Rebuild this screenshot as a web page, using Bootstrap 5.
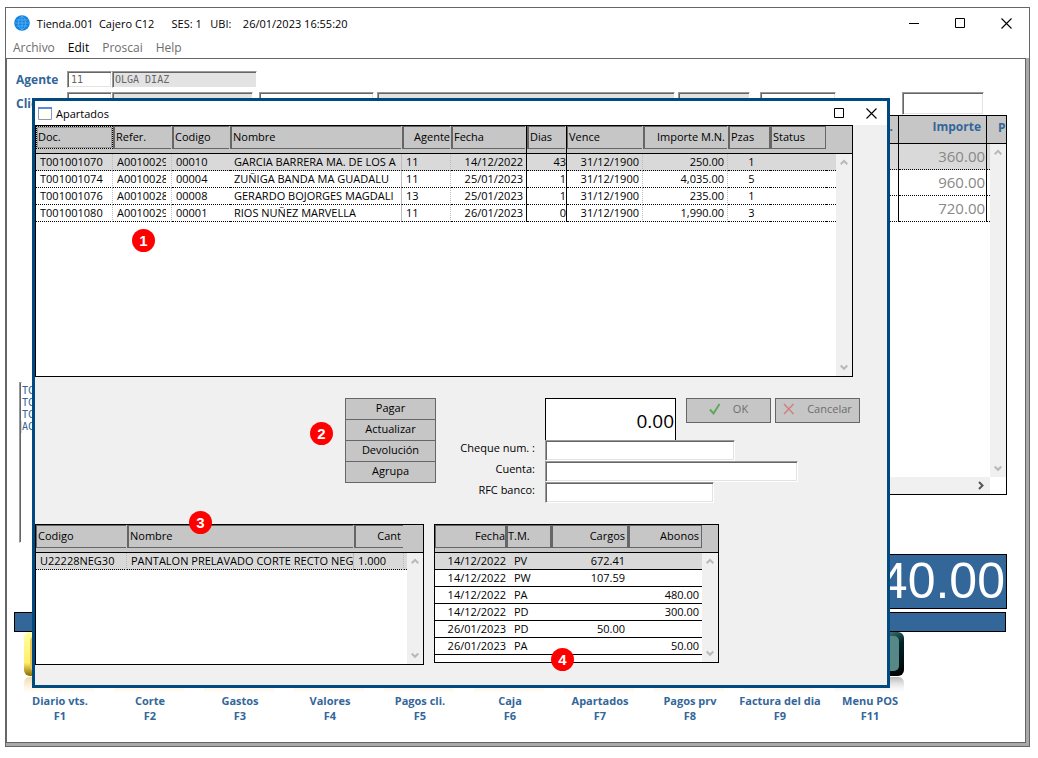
<!DOCTYPE html>
<html lang="es">
<head>
<meta charset="utf-8">
<meta name="viewport" content="width=device-width, initial-scale=1">
<title>Tienda.001 Cajero C12</title>
<link href="https://cdn.jsdelivr.net/npm/bootstrap@5.3.0/dist/css/bootstrap.min.css" rel="stylesheet">
<style>
  body { background: #fff; color: #000; font: 11px/17px "Open Sans", "Noto Sans", sans-serif; }
  a { text-decoration: none; }
  .pos { --blue: #336699; }
  .blue { color: var(--blue); }
  .app-window { margin: 7px 8px 11px 5px; border: 1px solid #666; min-height: calc(100vh - 18px); }
  .app-title { height: 30px; padding-left: 8px; white-space: pre; line-height: 15px; }
  .win-btn { width: 46px; height: 28px; padding: 0; border: 0; background: none; color: #000; display: flex; align-items: center; justify-content: center; }
  .menu-bar { height: 20px; padding-left: 7px; gap: 13px; }
  .menu-bar a { color: #6d6d6d; font-size: 12px; line-height: 20px; }
  .menu-bar a.on { color: #000; }
  .client { background: #a9a9a9; padding: 0 3px 3px 0; }
  .client-in { background: #fff; border: 1px solid #666; }

  .sunk { height: 17px; border: 1px solid; border-color: #999 #fff #fff #999; box-shadow: inset 1px 1px #666, inset -1px -1px #e3e3e3; background: #fff; border-radius: 0; padding: 0 3px; color: #666; font: 10px/13px "DejaVu Sans Mono", monospace; min-width: 0; }
  .sunk[readonly] { background: #e3e3e3; padding-left: 2px; }
  .pos-label { width: 51px; font-size: 12px; font-weight: 700; color: var(--blue); }
  .pos-row { padding-left: 9px; }
  .pos-row.top { padding-top: 12px; padding-bottom: 4px; }
  .pos-row.second { height: 23px; padding-right: 41px; }
  .w-code { width: 45px; }

  .panel { border: 1px solid #000; background: #fff; }
  .sheet { table-layout: fixed; width: 100%; border-collapse: separate; border-spacing: 0; flex: 1 1 0; min-width: 0; align-self: flex-start; }
  .sheet th { height: 28px; padding: 0; font-weight: 400; background: #c6c6c6; border-bottom: 1px solid #000; vertical-align: top; }
  .sheet th > span { display: block; height: 23px; line-height: 20px; padding: 0 2px 0 1px; border: 1px solid #666; border-left-width: 2px; white-space: nowrap; overflow: hidden; }
  .sheet th.first > span { border-left-width: 1px; padding-left: 1px; }
  .sheet th.open > span { border-right: 0; margin-right: 1px; }
  .sheet th.focus > span { border-style: dotted; border-color: #000; box-shadow: inset 0 0 0 1px #999; }
  .sheet td { height: 17px; line-height: 16px; padding: 0 3px 0 4px; border-bottom: 1px dotted #000; white-space: nowrap; overflow: hidden; }
  .sheet tr.sel td { background: #d9d9d9; }
  .sheet .dot { border-right: 1px dotted #bbb; }
  .sheet .gray { border-right: 1px solid #bbb; }
  .sheet .line { border-right: 1px solid #000; }
  .sheet.solid td { border-bottom-style: solid; }
  .sheet td.ref { padding-right: 5px; }
  .ref span { display: block; overflow: hidden; }
  .track { width: 16px; background: #f0f0f0; }
  .cap { height: 28px; background: #c6c6c6; border-bottom: 1px solid #000; flex: none; }
  .cap.unit { padding: 3px 0 0 8px; font-size: 12px; font-weight: 700; overflow: hidden; }
  .track svg { display: block; margin: 5px auto; }
  .num { text-align: right; }
  .sheet td.num { padding-right: 3px; }

  .sheet.big th > span { border: 0; padding: 0 5px; line-height: 22px; font-size: 12px; font-weight: 700; color: var(--blue); }
  .sheet.big td { height: 26px; line-height: 25px; font-size: 15px; color: #888; }
  .sheet.big td.num { padding-right: 1px; }
  .workspace { height: 428px; }
  .pos-grid { height: 380px; margin-right: 18px; }
  .hbar { height: 17px; }
  .hbar .rail { background: #f0f0f0; }
  .recent { width: 108px; height: 161px; margin: 0 18px 0 12px; padding: 2px 0 0 1px; }
  .recent li { font: 10px/12px "DejaVu Sans Mono", monospace; color: var(--blue); padding-left: 1px; }
  .recent li.sel { background: #d9d9d9; }
  .total { width: 400px; height: 55px; margin: 11px 18px 3px auto; background: var(--blue); color: #fff; border: 1px solid #000; font: 50px/53px "Liberation Sans", sans-serif; text-align: right; padding-right: 1px; }
  .strip { height: 20px; margin: 0 19px 0 7px; background: var(--blue); border: 1px solid #000; }
  .keys { padding-left: 8px; }
  .key { width: 90px; text-align: center; font-weight: 700; line-height: 15px; color: var(--blue); }
  .key svg { display: block; margin: 0 auto 1px 9px; }

  .dialog { position: absolute; left: 26px; right: 139px; top: 90px; border: 3px solid #004a80; background: #f0f0f0; }
  .dlg-title { height: 24px; background: #fff; padding-left: 3px; }
  .dlg-title .win-btn { width: 32px; height: 24px; }
  .main-panel { height: 252px; margin-right: 34px; }
  .controls { padding: 21px 28px 0 310px; height: 147px; }
  .flat { height: 22px; margin-bottom: -1px; width: 91px; border: 1px solid #666; background: #c6c6c6; color: #000; border-radius: 0; padding: 0 0 2px; font-size: 11px; line-height: 16px; }
  .flat.wide { width: 85px; height: 25px; color: #6d6d6d; margin: 0; padding-bottom: 3px; }
  .pay { margin-left: 20px; }
  .pay-top { padding-left: 89px; }
  .pay-top .flat:first-of-type { margin-left: 10px; }
  .amount { width: 131px; height: 42px; border: 1px solid #000; border-bottom: 0; border-radius: 0; text-align: right; padding: 2px 1px 0 0; background: #fff; font: 19px "Open Sans", sans-serif; }
  .pay label { width: 79px; text-align: right; margin-right: 10px; line-height: 15px; }
  .pay .sunk { height: 21px; }
  .w-cheque { width: 190px; }
  .w-cuenta { width: 253px; }
  .w-rfc { width: 169px; }
  .detail { width: 389px; height: 141px; }
  .moves { width: 285px; height: 139px; }
  .lower { gap: 10px; padding-bottom: 20px; }
  .pin { position: absolute; width: 23px; height: 23px; border-radius: 50%; background: #f00; color: #fff; font: bold 15px/23px "Liberation Sans", sans-serif; text-align: center; }
  .pin-1 { left: 96px; top: 103px; }
  .pin-2 { left: -35px; top: 24px; }
  .pin-3 { left: 153px; top: -14px; }
  .pin-4 { left: 116px; bottom: -9px; }
</style>
</head>
<body>
<svg width="0" height="0" class="position-absolute" aria-hidden="true">
  <defs>
    <symbol id="up" viewBox="0 0 8 7"><path d="M.7 5.2 4 1.9l3.300 3.300" fill="none" stroke="#b8b8b8" stroke-width="2"/></symbol>
    <symbol id="down" viewBox="0 0 8 7"><path d="M.7 1.500 4 4.800l3.300-3.300" fill="none" stroke="#b8b8b8" stroke-width="2"/></symbol>
    <symbol id="square" viewBox="0 0 11 11"><path d="M.5.5h9v9h-9z" fill="none" stroke="#000"/></symbol>
    <symbol id="cross" viewBox="0 0 11 11"><path d="m.5.5 10 10m0-10-10 10" fill="none" stroke="#000" stroke-width="1.100"/></symbol>
    <linearGradient id="gold" x1="0" y1="0" x2="0" y2="1"><stop offset="0" stop-color="#ffffa0"/><stop offset=".7" stop-color="#ffee6a"/><stop offset="1" stop-color="#8a6a00"/></linearGradient>
    <linearGradient id="teal" x1="0" y1="0" x2="1" y2="1"><stop offset="0" stop-color="#9cc4c4"/><stop offset=".4" stop-color="#3d7070"/><stop offset=".6" stop-color="#002428"/><stop offset="1" stop-color="#000"/></linearGradient>
    <linearGradient id="mirror" x1="0" y1="0" x2="0" y2="1"><stop offset="0" stop-color="#888" stop-opacity=".6"/><stop offset="1" stop-color="#eee" stop-opacity=".1"/></linearGradient>
    <linearGradient id="glow" x1="0" y1="0" x2="0" y2="1"><stop offset="0" stop-color="#e8cc80" stop-opacity=".7"/><stop offset="1" stop-color="#fff4e8" stop-opacity=".3"/></linearGradient>
    <symbol id="key-gold" viewBox="0 0 70 60"><rect width="70" height="44" rx="6" fill="url(#gold)"/><rect x="6" y="4" width="58" height="35" rx="5" fill="#ecc44e"/><path d="M0 60V52q0-7 6-7h58q6 0 6 7v8z" fill="url(#glow)"/></symbol>
    <symbol id="key-teal" viewBox="0 0 70 60"><rect width="70" height="44" rx="6" fill="url(#teal)"/><rect x="6" y="4" width="59" height="35" rx="5" fill="#568888"/><path d="M0 60V52q0-7 6-7h58q6 0 6 7v8z" fill="url(#mirror)"/></symbol>
  </defs>
</svg>

<div class="pos app-window position-relative d-flex flex-column">
  <header class="app-title d-flex align-items-center">
    <svg width="16" height="16" viewBox="0 0 16 16" class="me-1" aria-hidden="true"><circle cx="8" cy="8" r="7.800" fill="#1382e0"/><g stroke="#58b4f4" stroke-width=".8" fill="none"><path d="M2.500 5h11M1 8h14M2.500 11h11M8 1v14"/><ellipse cx="8" cy="8" rx="3.500" ry="6.500"/></g></svg>
    <span class="flex-grow-1"> Tienda.001  Cajero C12      SES: 1   UBI:    26/01/2023 16:55:20</span>
    <button class="win-btn" aria-label="Minimizar"><svg width="11" height="11"><path d="M0 5.500h10" stroke="#000"/></svg></button>
    <button class="win-btn" aria-label="Maximizar"><svg width="11" height="11"><use href="#square"/></svg></button>
    <button class="win-btn" aria-label="Cerrar"><svg width="11" height="11"><use href="#cross"/></svg></button>
  </header>
  <nav class="menu-bar d-flex align-items-center">
    <a href="#">Archivo</a><a href="#" class="on">Edit</a><a href="#">Proscai</a><a href="#">Help</a>
  </nav>

  <main class="client flex-grow-1 d-flex">
    <div class="client-in flex-grow-1">
      <div class="pos-row top d-flex align-items-center">
        <label class="pos-label" for="agente">Agente</label>
        <input id="agente" class="sunk w-code" value="11">
        <input class="sunk" style="width:145px" value="OLGA DIAZ" aria-label="Nombre del agente" readonly>
      </div>
      <div class="pos-row second d-flex align-items-center">
        <label class="pos-label" for="cliente">Cliente</label>
        <input id="cliente" class="sunk w-code h-100">
        <input class="sunk h-100" style="width:141px" value="GARCIA BARRERA MA. DE L" aria-label="Nombre del cliente" readonly>
        <input class="sunk h-100" style="width:115px;margin-left:6px" aria-label="Dato 1">
        <input class="sunk h-100 flex-grow-1" style="width:50px;margin:0 3px" aria-label="Dato 2" readonly>
        <input class="sunk h-100" style="width:72px" aria-label="Dato 3" readonly>
        <input class="sunk h-100" style="width:76px;margin:0 66px 0 10px" aria-label="Dato 4">
        <input class="sunk h-100" style="width:82px" aria-label="Dato 5">
      </div>

      <div class="workspace d-flex">
        <ul class="recent list-unstyled align-self-end sunk"><li>TC</li><li>TC</li><li>TC</li><li class="sel">AC</li></ul>
        <div class="flex-grow-1">
          <div class="pos-grid panel d-flex flex-column">
            <div class="d-flex flex-grow-1">
              <table class="sheet big">
                <colgroup><col><col style="width:88px"><col style="width:3px"></colgroup>
                <thead><tr><th class="num line"><span>Precio.</span></th><th class="num line"><span>Importe</span></th><th></th></tr></thead>
                <tbody>
                  <tr class="sel"><td class="line"></td><td class="num line">360.00</td><td></td></tr>
                  <tr><td class="line"></td><td class="num line">960.00</td><td></td></tr>
                  <tr><td class="line"></td><td class="num line">720.00</td><td></td></tr>
                </tbody>
              </table>
              <div class="track d-flex flex-column">
                <div class="cap unit blue">P</div>
                <svg width="8" height="7"><use href="#up"/></svg>
                <svg width="8" height="7" class="mt-auto"><use href="#down"/></svg>
              </div>
            </div>
            <div class="hbar d-flex">
              <div class="rail flex-grow-1 d-flex align-items-center justify-content-end"><svg width="9" height="9" class="me-1"><path d="m2 1 3.500 3.500L2 8" fill="none" stroke="#555" stroke-width="2"/></svg></div>
              <div class="ps-3"></div>
            </div>
          </div>
        </div>
      </div>
      <div class="total">2,040.00</div>
      <div class="strip"></div>
      <nav class="keys d-flex">
        <a class="key" href="#"><svg width="70" height="60"><use href="#key-gold"/></svg>Diario vts.<br>F1</a>
        <a class="key" href="#"><svg width="70" height="60"><use href="#key-gold"/></svg>Corte<br>F2</a>
        <a class="key" href="#"><svg width="70" height="60"><use href="#key-gold"/></svg>Gastos<br>F3</a>
        <a class="key" href="#"><svg width="70" height="60"><use href="#key-gold"/></svg>Valores<br>F4</a>
        <a class="key" href="#"><svg width="70" height="60"><use href="#key-gold"/></svg>Pagos cli.<br>F5</a>
        <a class="key" href="#"><svg width="70" height="60"><use href="#key-gold"/></svg>Caja<br>F6</a>
        <a class="key" href="#"><svg width="70" height="60"><use href="#key-gold"/></svg>Apartados<br>F7</a>
        <a class="key" href="#"><svg width="70" height="60"><use href="#key-gold"/></svg>Pagos prv<br>F8</a>
        <a class="key" href="#"><svg width="70" height="60"><use href="#key-gold"/></svg>Factura del dia<br>F9</a>
        <a class="key" href="#"><svg width="70" height="60"><use href="#key-teal"/></svg>Menu POS<br>F11</a>
      </nav>
    </div>
  </main>

  <section class="dialog" role="dialog" aria-label="Apartados">
    <div class="dlg-title d-flex align-items-center">
      <svg width="14" height="13" class="me-1" aria-hidden="true"><path d="M.5.5h13v12H.5z" fill="#fffff4" stroke="#8c96c8"/><path d="M0 1h14" stroke="#5b8be0" stroke-width="2"/></svg>
      <span class="flex-grow-1">Apartados</span>
      <button class="win-btn" aria-label="Maximizar"><svg width="11" height="11"><use href="#square"/></svg></button>
      <button class="win-btn" aria-label="Cerrar"><svg width="11" height="11"><use href="#cross"/></svg></button>
    </div>

    <div class="main-panel panel d-flex position-relative">
      <table class="sheet">
        <colgroup><col style="width:77px"><col style="width:59px"><col style="width:58px"><col style="width:172px"><col style="width:49px"><col style="width:76px"><col style="width:40px"><col style="width:76px"><col style="width:85px"><col style="width:42px"><col style="width:56px"><col></colgroup>
        <thead><tr>
          <th class="first focus"><span>Doc.</span></th><th class="open"><span>Refer.</span></th><th class="open"><span>Codigo</span></th><th class="open"><span>Nombre</span></th><th class="open num"><span class="px-0">Agente</span></th><th class="line open"><span>Fecha</span></th><th class="line open"><span>Dias</span></th><th class="open first"><span>Vence</span></th><th class="open num"><span>Importe M.N.</span></th><th><span>Pzas</span></th><th><span>Status</span></th><th></th>
        </tr></thead>
        <tbody>
          <tr class="sel"><td class="dot">T001001070</td><td class="dot ref"><span>A0010029</span></td><td>00010</td><td class="gray">GARCIA BARRERA MA. DE LOS A</td><td class="dot">11</td><td class="num line">14/12/2022</td><td class="num line pe-0">43</td><td class="num dot">31/12/1900</td><td class="num dot">250.00</td><td class="text-center ps-2">1</td><td></td><td></td></tr>
          <tr><td class="dot">T001001074</td><td class="dot ref"><span>A0010028</span></td><td>00004</td><td class="gray">ZUÑIGA BANDA MA GUADALU</td><td class="dot">11</td><td class="num line">25/01/2023</td><td class="num line pe-0">1</td><td class="num dot">31/12/1900</td><td class="num dot">4,035.00</td><td class="text-center ps-2">5</td><td></td><td></td></tr>
          <tr><td class="dot">T001001076</td><td class="dot ref"><span>A0010028</span></td><td>00008</td><td class="gray">GERARDO BOJORGES MAGDALI</td><td class="dot">13</td><td class="num line">25/01/2023</td><td class="num line pe-0">1</td><td class="num dot">31/12/1900</td><td class="num dot">235.00</td><td class="text-center ps-2">1</td><td></td><td></td></tr>
          <tr><td class="dot">T001001080</td><td class="dot ref"><span>A0010029</span></td><td>00001</td><td class="gray">RIOS NUÑEZ MARVELLA</td><td class="dot">11</td><td class="num line">26/01/2023</td><td class="num line pe-0">0</td><td class="num dot">31/12/1900</td><td class="num dot">1,990.00</td><td class="text-center ps-2">3</td><td></td><td></td></tr>
        </tbody>
      </table>
      <div class="track d-flex flex-column"><div class="cap"></div><svg width="8" height="7"><use href="#up"/></svg><svg width="8" height="7" class="mt-auto"><use href="#down"/></svg></div>
      <span class="pin pin-1">1</span>
    </div>

    <div class="controls d-flex align-items-start">
      <div class="d-flex flex-column position-relative">
        <button class="flat">Pagar</button><button class="flat">Actualizar</button><button class="flat">Devolución</button><button class="flat">Agrupa</button>
        <span class="pin pin-2">2</span>
      </div>
      <form class="pay">
        <div class="pay-top d-flex">
          <input class="amount" value="0.00" aria-label="Importe">
          <button type="button" class="flat wide d-flex align-items-center justify-content-center"><svg width="12" height="12" class="me-2"><path d="m1 6.500 3.500 4L10.500 1" fill="none" stroke="#5fa860" stroke-width="2"/></svg><span class="ms-1">OK</span></button>
          <button type="button" class="flat wide d-flex align-items-center justify-content-center ms-1"><svg width="12" height="12" class="me-2"><path d="m1 1 9.500 10M10.500 1 1 11" fill="none" stroke="#d08080" stroke-width="1.500"/></svg><span class="ms-1">Cancelar</span></button>
        </div>
        <div class="d-flex"><label for="cheque">Cheque num. :</label><input id="cheque" class="sunk w-cheque"></div>
        <div class="d-flex"><label for="cuenta">Cuenta:</label><input id="cuenta" class="sunk w-cuenta"></div>
        <div class="d-flex"><label for="rfc">RFC banco:</label><input id="rfc" class="sunk w-rfc"></div>
      </form>
    </div>

    <div class="lower d-flex align-items-start">
      <div class="detail panel d-flex position-relative">
        <table class="sheet">
          <colgroup><col style="width:91px"><col style="width:227px"><col style="width:50px"><col></colgroup>
          <thead><tr><th class="first open"><span>Codigo</span></th><th class="open"><span>Nombre</span></th><th class="open num"><span>Cant</span></th><th></th></tr></thead>
          <tbody><tr class="sel"><td class="dot">U22228NEG30</td><td class="gray">PANTALON PRELAVADO CORTE RECTO NEG</td><td class="dot">1.000</td><td></td></tr></tbody>
        </table>
        <div class="track d-flex flex-column"><div class="cap"></div><svg width="8" height="7"><use href="#up"/></svg><svg width="8" height="7" class="mt-auto"><use href="#down"/></svg></div>
        <span class="pin pin-3">3</span>
      </div>
      <div class="moves panel d-flex position-relative">
        <table class="sheet solid">
          <colgroup><col style="width:71px"><col style="width:45px"><col style="width:77px"><col></colgroup>
          <thead><tr><th class="first num"><span class="pe-0">Fecha</span></th><th><span class="ps-0">T.M.</span></th><th class="num"><span>Cargos</span></th><th class="num"><span>Abonos</span></th></tr></thead>
          <tbody>
            <tr class="sel"><td class="num pe-0">14/12/2022</td><td class="ps-2">PV</td><td class="num">672.41</td><td></td></tr>
            <tr><td class="num pe-0">14/12/2022</td><td class="ps-2">PW</td><td class="num">107.59</td><td></td></tr>
            <tr><td class="num pe-0">14/12/2022</td><td class="ps-2">PA</td><td></td><td class="num">480.00</td></tr>
            <tr><td class="num pe-0">14/12/2022</td><td class="ps-2">PD</td><td></td><td class="num">300.00</td></tr>
            <tr><td class="num pe-0">26/01/2023</td><td class="ps-2">PD</td><td class="num">50.00</td><td></td></tr>
            <tr><td class="num pe-0">26/01/2023</td><td class="ps-2">PA</td><td></td><td class="num">50.00</td></tr>
          </tbody>
        </table>
        <div class="track d-flex flex-column"><div class="cap"></div><svg width="8" height="7"><use href="#up"/></svg><svg width="8" height="7" class="mt-auto"><use href="#down"/></svg></div>
        <span class="pin pin-4">4</span>
      </div>
    </div>
  </section>
</div>
<script src="https://cdn.jsdelivr.net/npm/bootstrap@5.3.0/dist/js/bootstrap.bundle.min.js"></script>
</body>
</html>
